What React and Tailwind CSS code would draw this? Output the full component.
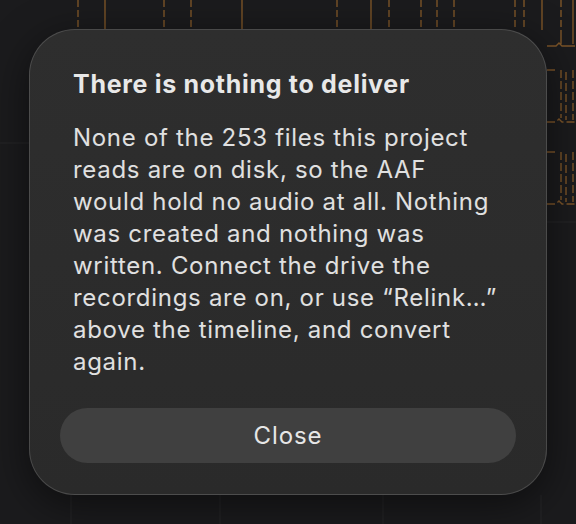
const dashed = [78, 164, 191, 337, 389, 421, 437, 454, 515, 524, 561];
const solid = [105, 242, 371, 542, 573];

function TimelineBackdrop() {
  return (
    <svg className="absolute inset-0" width="576" height="524" viewBox="0 0 576 524">
      {dashed.map((x) => (
        <line key={`d${x}`} x1={x} y1="0" x2={x} y2="30" stroke="#7c5428" strokeWidth="1.4" strokeDasharray="7 3" />
      ))}
      {solid.map((x) => (
        <line key={`s${x}`} x1={x} y1="0" x2={x} y2="30" stroke="#7c5428" strokeWidth="1.4" />
      ))}
      {/* clips peeking out on the right */}
      <g stroke="#7c5428" strokeWidth="1.4" fill="none">
        <path d="M561 30 V44 M573 30 V44 M547 46 H556 L559 43 L562 46 H575" />
        <path d="M547 70 H556 M561 70 V118 M566 72 V120 M573 70 V120 M547 122 H556 L559 119 L562 122 H575" strokeDasharray="8 3" />
        <path d="M547 152 H556 M561 152 V200 M566 154 V202 M573 152 V202 M547 204 H556 L559 201 L562 204 H575" strokeDasharray="8 3" />
      </g>
      <g stroke="#262628" strokeWidth="1">
        <line x1="71" y1="495" x2="71" y2="524" />
        <line x1="220" y1="495" x2="220" y2="524" />
        <line x1="383" y1="495" x2="383" y2="524" />
        <line x1="541" y1="495" x2="541" y2="524" />
        <line x1="547" y1="222" x2="576" y2="222" />
        <line x1="0" y1="143" x2="29" y2="143" />
      </g>
    </svg>
  );
}

export default function App() {
  return (
    <div
      className="relative w-[576px] h-[524px] overflow-hidden bg-[#1b1b1d]"
      style={{ fontFamily: 'Inter, "Noto Sans", sans-serif' }}
    >
      <TimelineBackdrop />
      <div className="relative pt-[29px] pl-[29px]">
        <div className="w-[518px] h-[466px] rounded-[46px] border border-white/15 bg-gradient-to-b from-[#2e2e2e] to-[#2a2a2a] shadow-[0_10px_40px_rgba(0,0,0,0.5)] flex flex-col">
          <div className="px-[43px] pt-[40px]">
            <h2 className="text-[25px] leading-[28px] font-bold text-[#e8e8e8] tracking-[0.7px] whitespace-nowrap">
              There is nothing to deliver
            </h2>
            <p className="mt-[24px] text-[24px] leading-[32px] text-[#e0e0e0] tracking-[0.7px] whitespace-nowrap">
              None of the 253 files this project<br />
              reads are on disk, so the AAF<br />
              would hold no audio at all. Nothing<br />
              was created and nothing was<br />
              written. Connect the drive the<br />
              recordings are on, or use “Relink…”<br />
              above the timeline, and convert<br />
              again.
            </p>
          </div>
          <div className="mt-auto px-[30px] pb-[31px]">
            <button className="w-full h-[55px] rounded-full bg-[#404040] text-[24px] tracking-[0.9px] text-[#e6e6e6]">
              Close
            </button>
          </div>
        </div>
      </div>
    </div>
  );
}
